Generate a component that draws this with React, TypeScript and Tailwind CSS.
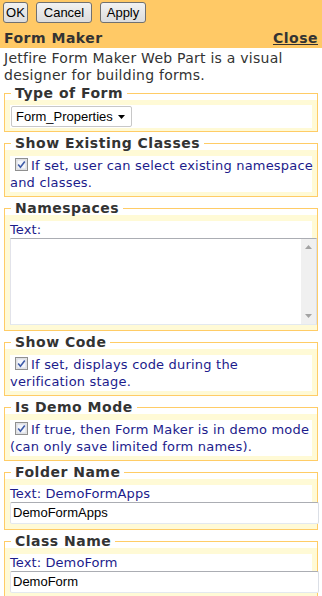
import type { ReactNode } from "react"

function Btn({ label, w }: { label: string; w: string }) {
    return (
        <button
            className={`${w} h-[21px] rounded-[3px] border border-[#707070] bg-gradient-to-b from-[#f2f2f2] to-[#dcdcdc] font-['Liberation_Sans'] text-[13px] leading-none tracking-normal text-black`}
        >
            {label}
        </button>
    )
}

function Check() {
    return (
        <svg width="13" height="13" viewBox="0 0 13 13" className="mr-[3px] inline-block align-[-1px]">
            <rect x="0.5" y="0.5" width="12" height="12" fill="#e8e8e8" stroke="#8f8f8f" />
            <rect x="2" y="2" width="9" height="9" fill="#f4f6fb" stroke="#c9ced8" strokeWidth="0.6" />
            <path d="M3.2 6.6 L5.4 9.2 L9.8 3.4" fill="none" stroke="#3d5aa8" strokeWidth="1.6" />
        </svg>
    )
}

function Box({ title, pad = "pt-[6px] pb-[5px]", top = "mt-[4px]", children }: { title: string; pad?: string; top?: string; children: ReactNode }) {
    return (
        <fieldset className={`mx-1 ${top} min-w-0 border border-[#ffcc66]`}>
            <legend className="ml-[6px] px-[4px] font-bold leading-[14px] tracking-[0.5px] text-[#333333]">{title}</legend>
            <div className={`bg-[#fffad6] px-[5px] ${pad}`}>{children}</div>
        </fieldset>
    )
}

// lines are broken by hand so they wrap where the original does
function CheckText({ lines }: { lines: string[] }) {
    return (
        <div className="whitespace-nowrap bg-white py-[1px] text-[13px] leading-[17px] tracking-[0.2px] text-[#1c1c8c]">
            <div className="pl-[5px]">
                <Check />
                {lines[0]}
            </div>
            <div>{lines[1]}</div>
        </div>
    )
}

function Label({ text }: { text: string }) {
    return <div className="bg-white text-[13px] leading-[17px] tracking-[0.1px] text-[#1c1c8c]">{text}</div>
}

function TextInput({ label, value }: { label: string; value: string }) {
    return (
        <div>
            <Label text={label} />
            <div className="-mr-[7px] h-[22px] rounded-[2px] border border-[#abadb3] border-b-[#e3e9ef] border-l-[#e2e3ea] border-r-[#dbdfe6] bg-white px-[2px] font-['Liberation_Sans'] text-[13px] leading-[20px] tracking-normal text-black">
                {value}
            </div>
        </div>
    )
}

export default function App() {
    return (
        <div className="h-[596px] w-[322px] overflow-hidden bg-white font-['DejaVu_Sans'] text-[14px] tracking-[0.25px] text-[#333333]">
            {/* header */}
            <div className="bg-[#ffc966]">
                <div className="flex gap-[8px] px-[3px] pt-[2px]">
                    <Btn label="OK" w="w-[25px]" />
                    <Btn label="Cancel" w="w-[56px]" />
                    <Btn label="Apply" w="w-[46px]" />
                </div>
                <div className="flex h-[25px] items-end justify-between px-1 pb-[2px] font-bold leading-[15px] tracking-[0.5px]">
                    <span>Form Maker</span>
                    <span className="underline">Close</span>
                </div>
            </div>

            <div className="px-1 pt-[2px] leading-[17px]">
                Jetfire Form Maker Web Part is a visual designer for building forms.
            </div>

            <Box title="Type of Form" top="mt-[2px]" pad="pt-[5px] pb-[3px]">
                <div className="bg-white p-[1px]">
                    <div className="flex h-[21px] w-[121px] items-center justify-between rounded-[2px] border border-[#c8c8c8] bg-white pl-[4px] pr-[6px] font-['Liberation_Sans'] text-[13px] tracking-normal text-black">
                        <span>Form_Properties</span>
                        <svg width="7" height="4" viewBox="0 0 7 4">
                            <path d="M0 0 H7 L3.5 4 Z" fill="#000" />
                        </svg>
                    </div>
                </div>
            </Box>

            <Box title="Show Existing Classes" pad="pt-[6px] pb-[4px]">
                <CheckText lines={["If set, user can select existing namespace", "and classes."]} />
            </Box>

            <Box title="Namespaces">
                <Label text="Text:" />
                <div className="-mr-[5px] flex h-[87px] border border-[#abadb3] border-b-[#e3e9ef] border-l-[#e2e3ea] border-r-[#dbdfe6] bg-white">
                    <div className="flex-1" />
                    <div className="flex w-[15px] flex-col items-center justify-between bg-[#f0f0f0] py-[6px]">
                        <svg width="7" height="4" viewBox="0 0 7 4">
                            <path d="M0 4 H7 L3.5 0 Z" fill="#a3a3a3" />
                        </svg>
                        <svg width="7" height="4" viewBox="0 0 7 4">
                            <path d="M0 0 H7 L3.5 4 Z" fill="#a3a3a3" />
                        </svg>
                    </div>
                </div>
            </Box>

            <Box title="Show Code" pad="pt-[6px] pb-[4px]">
                <CheckText lines={["If set, displays code during the", "verification stage."]} />
            </Box>

            <Box title="Is Demo Mode" pad="pt-[6px] pb-[4px]">
                <CheckText lines={["If true, then Form Maker is in demo mode", "(can only save limited form names)."]} />
            </Box>

            <Box title="Folder Name">
                <TextInput label="Text: DemoFormApps" value="DemoFormApps" />
            </Box>

            <Box title="Class Name">
                <TextInput label="Text: DemoForm" value="DemoForm" />
            </Box>
        </div>
    )
}
